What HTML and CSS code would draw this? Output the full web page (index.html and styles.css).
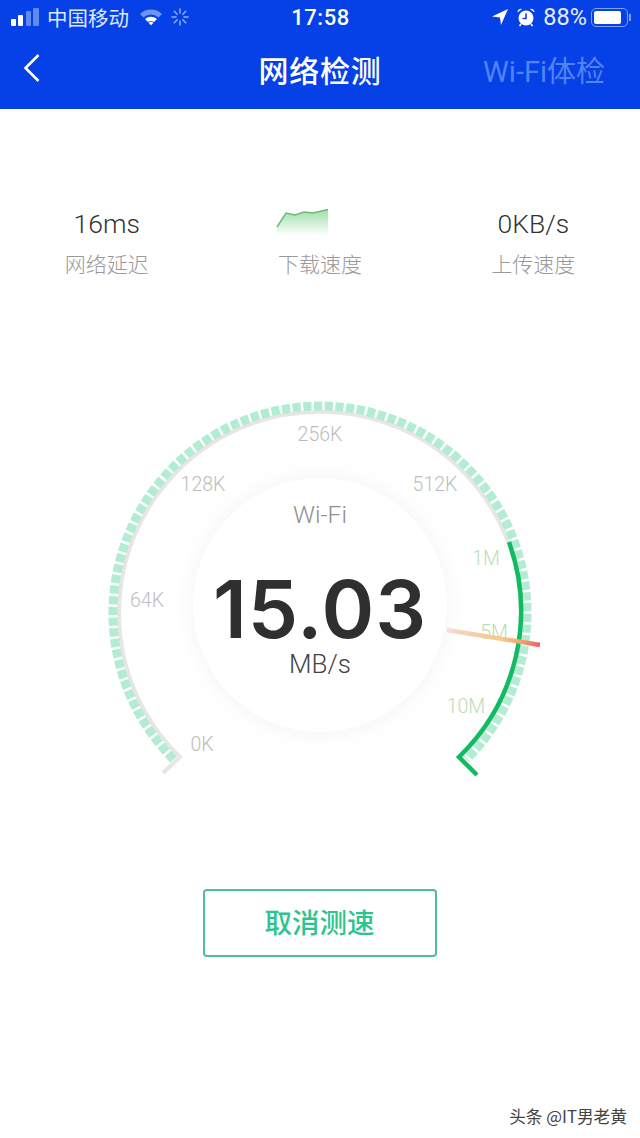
FILE: index.html

```html
<!DOCTYPE html>
<html lang="zh-CN">
<head>
  <meta charset="UTF-8" />
  <meta name="viewport" content="width=device-width, initial-scale=1.0"/>
  <title>网络检测</title>
  <link rel="stylesheet" href="styles.css">
</head>
<body>
  <header class="top">
    <div class="status-bar">
      <div class="status-left">
        <svg class="signal" width="30" height="20" viewBox="0 0 30 20">
          <rect x="1" y="12" width="5" height="7" rx="1" fill="#fff"/>
          <rect x="8" y="8" width="5" height="11" rx="1" fill="#fff"/>
          <rect x="16" y="4" width="5" height="15" rx="1" fill="#5f8af0"/>
          <rect x="23" y="1" width="6" height="18" rx="1" fill="#5f8af0"/>
        </svg>
        <span class="carrier">中国移动</span>
        <svg class="wifi" width="24" height="18" viewBox="0 0 24 18">
          <path d="M1 6 A16 16 0 0 1 23 6 L19.500 9.500 A11 11 0 0 0 4.500 9.500 Z" fill="#6f96f2"/>
          <path d="M6 11 A9 9 0 0 1 18 11 L15 14 A5 5 0 0 0 9 14 Z" fill="#fff"/>
          <path d="M9.500 14.800 A4 4 0 0 1 14.500 14.800 L12 17.300 Z" fill="#fff"/>
        </svg>
        <svg class="spinner" width="18" height="18" viewBox="0 0 18 18" stroke="#8fb0f6" stroke-width="1.500" stroke-linecap="round">
          <path d="M9 1V5M9 13V17M1 9H5M13 9H17M3.300 3.300L6.200 6.200M11.800 11.800L14.700 14.700M14.700 3.300L11.800 6.200M6.200 11.800L3.300 14.700"/>
        </svg>
      </div>
      <div class="status-time">17:58</div>
      <div class="status-right">
        <svg width="18" height="18" viewBox="0 0 18 18"><path d="M17 1 L1 8.500 L9 9.500 L10 17 Z" fill="#fff"/></svg>
        <svg class="alarm" width="20" height="20" viewBox="0 0 20 20">
          <circle cx="10" cy="11" r="7.500" fill="#fff"/>
          <path d="M10 6.500V11.500H6.500" fill="none" stroke="#0541e6" stroke-width="1.600"/>
          <path d="M1.500 5.500 A3.500 3.500 0 0 1 6 2 Z M18.500 5.500 A3.500 3.500 0 0 0 14 2 Z" fill="#fff"/>
          <path d="M5 17L3.500 19M15 17L16.500 19" stroke="#fff" stroke-width="1.600"/>
        </svg>
        <span class="battery-pct">88%</span>
        <div class="battery"><div class="battery-level"></div></div>
        <div class="battery-tip"></div>
      </div>
    </div>
    <nav class="nav">
      <svg class="back" width="18" height="30" viewBox="0 0 18 30">
        <path d="M15.500 2 L2.500 15 L15.500 28" fill="none" stroke="#fff" stroke-width="2.600"/>
      </svg>
      <h1 class="nav-title">网络检测</h1>
      <span class="nav-link">Wi-Fi体检</span>
    </nav>
  </header>

  <section class="stats">
    <div class="stat">
      <div class="stat-value">16ms</div>
      <div class="stat-label">网络延迟</div>
    </div>
    <div class="stat">
      <div class="stat-value">
        <svg class="spark" width="54" height="30" viewBox="0 0 54 30">
          <defs>
            <linearGradient id="sparkFill" x1="0" y1="0" x2="0" y2="1">
              <stop offset="0" stop-color="#9fe0a8"/>
              <stop offset="1" stop-color="#ffffff"/>
            </linearGradient>
          </defs>
          <path d="M1 20 L10 6 L19 8 L28 5 L37 6 L52 2.500 V29 H1 Z" fill="url(#sparkFill)"/>
          <path d="M1 20 L10 6 L19 8 L28 5 L37 6 L52 2.500" fill="none" stroke="#6cb978" stroke-width="1.500"/>
        </svg>
      </div>
      <div class="stat-label">下载速度</div>
    </div>
    <div class="stat">
      <div class="stat-value">0KB/s</div>
      <div class="stat-label">上传速度</div>
    </div>
  </section>

  <section class="gauge">
    <svg class="gauge-dial" width="640" height="400" viewBox="0 0 640 400">
      <defs>
        <linearGradient id="needle" gradientUnits="userSpaceOnUse" x1="447" y1="240" x2="540" y2="255">
          <stop offset="0" stop-color="#f6d3c8"/>
          <stop offset="0.6" stop-color="#f6c98a"/>
          <stop offset="0.8" stop-color="#f2a070"/>
          <stop offset="1" stop-color="#ee5f6c"/>
        </linearGradient>
      </defs>
      <path class="dial-track" d="M163 383 L180 367 A201 201 0 1 1 460 367"/>
      <path class="dial-ticks" d="M173.600 369.400 A207 207 0 1 1 466.400 369.400"/>
      <path class="dial-progress" d="M477 385 L459 367 A203 203 0 0 0 509 152"/>
      <text class="mark" x="320" y="51">256K</text>
      <text class="mark" x="203" y="101">128K</text>
      <text class="mark" x="435" y="101">512K</text>
      <text class="mark" x="147" y="217">64K</text>
      <text class="mark" x="202" y="361">0K</text>
      <text class="mark mark-done" x="486" y="175">1M</text>
      <text class="mark mark-done" x="494" y="249">5M</text>
      <text class="mark mark-done" x="466" y="323">10M</text>
      <line class="dial-needle" x1="447" y1="240" x2="540" y2="255"/>
    </svg>
    <div class="dial-center">
      <div class="dial-type">Wi-Fi</div>
      <div class="dial-speed">15.03</div>
      <div class="dial-unit">MB/s</div>
    </div>
  </section>

  <div class="actions">
    <button class="cancel-btn">取消测速</button>
  </div>

  <div class="watermark">头条 @IT男老黄</div>
</body>
</html>
```

FILE: styles.css

```css
* {
  box-sizing: border-box;
}
html, body {
  margin: 0;
  height: 1138px;
  overflow: hidden;
}
body {
  position: relative;
  background: #fff;
  font-family: Roboto, "Noto Sans CJK SC", sans-serif;
  color: #333;
}

/* header */
.top {
  height: 109px;
  background: #0541e6;
  color: #fff;
}
.status-bar {
  height: 34px;
  display: grid;
  grid-template-columns: 1fr auto 1fr;
  align-items: center;
  padding: 0 9px 0 10px;
}
.status-left, .status-right {
  display: flex;
  align-items: center;
}
.status-right {
  justify-content: flex-end;
}
.carrier {
  margin-left: 7px;
  font-size: 20.500px;
  color: #dfe8fd;
}
.wifi {
  margin-left: 10px;
}
.spinner {
  margin-left: 8px;
}
.status-time {
  font-size: 22px;
  font-weight: 500;
  letter-spacing: 0.500px;
}
.alarm {
  margin-left: 7px;
}
.battery-pct {
  margin-left: 7px;
  font-size: 23.500px;
  color: #e6edfe;
}
.battery {
  width: 37px;
  height: 19px;
  margin-left: 4px;
  padding: 2px;
  border: 1.500px solid #7ea1f4;
  border-radius: 5px;
}
.battery-level {
  width: 88%;
  height: 100%;
  background: #fff;
  border-radius: 2px;
}
.battery-tip {
  width: 2px;
  height: 7px;
  margin-left: 1px;
  background: #7ea1f4;
}
.nav {
  height: 75px;
  display: grid;
  grid-template-columns: 1fr auto 1fr;
  align-items: center;
  padding: 0 35px 6px;
}
.back {
  display: block;
  margin: -2px 0 0 -12px;
}
.nav-title {
  margin: 0;
  font-size: 30px;
  font-weight: 500;
  letter-spacing: 0.700px;
}
.nav-link {
  justify-self: end;
  font-size: 29px;
  color: #5283f3;
}

/* stats row */
.stats {
  display: grid;
  grid-template-columns: repeat(3, 1fr);
  padding-top: 92px;
}
.stat {
  text-align: center;
}
.stat-value {
  height: 44px;
  display: flex;
  align-items: center;
  justify-content: center;
  font-size: 26.500px;
  font-weight: 300;
  color: #333;
}
.spark {
  margin: -2px 33px 0 0;
}
.stat-label {
  margin-top: 7px;
  font-size: 21px;
  font-weight: 300;
  line-height: 27px;
  color: #999;
}

/* gauge */
.gauge {
  position: relative;
  height: 400px;
  margin-top: 111px;
}
.gauge-dial {
  display: block;
}
.dial-track {
  fill: none;
  stroke: #e8e6e5;
  stroke-width: 4;
}
.dial-ticks {
  fill: none;
  stroke: #b2ecd3;
  stroke-width: 9;
  stroke-dasharray: 8.200 2.500;
}
.dial-progress {
  fill: none;
  stroke: #10bb62;
  stroke-width: 4.500;
}
.dial-needle {
  stroke: url(#needle);
  stroke-width: 4.500;
}
.mark {
  font-size: 19.500px;
  font-weight: 300;
  text-anchor: middle;
  fill: #bdbdbd;
}
.mark-done {
  fill: #bcdcb6;
}
.dial-center {
  position: absolute;
  left: 193px;
  top: 88px;
  width: 254px;
  height: 254px;
  display: flex;
  flex-direction: column;
  align-items: center;
  padding-top: 23px;
  border-radius: 50%;
  background: #fff;
  box-shadow: 0 0 24px #f3f3f3;
}
.dial-type {
  font-size: 24.500px;
  font-weight: 300;
  line-height: 28px;
  color: #8f8f8f;
}
.dial-speed {
  margin-top: 40px;
  font-family: Inter, sans-serif;
  font-size: 80px;
  font-weight: 600;
  line-height: 80px;
  letter-spacing: 1px;
  color: #2f2f2f;
}
.dial-unit {
  font-size: 26px;
  font-weight: 300;
  line-height: 30px;
  color: #444;
}

/* button */
.actions {
  display: flex;
  justify-content: center;
  margin-top: 99px;
}
.cancel-btn {
  width: 234px;
  height: 68px;
  padding: 0 1px 4px 0;
  border: 2px solid #4cbf96;
  border-radius: 4px;
  background: #fff;
  font-family: "Noto Sans CJK SC", sans-serif;
  font-size: 27.500px;
  font-weight: 500;
  color: #2ec48d;
}

.watermark {
  position: absolute;
  right: 13px;
  bottom: 10px;
  font-family: "Noto Sans CJK SC", sans-serif;
  font-size: 16.700px;
  color: #444;
}
```
